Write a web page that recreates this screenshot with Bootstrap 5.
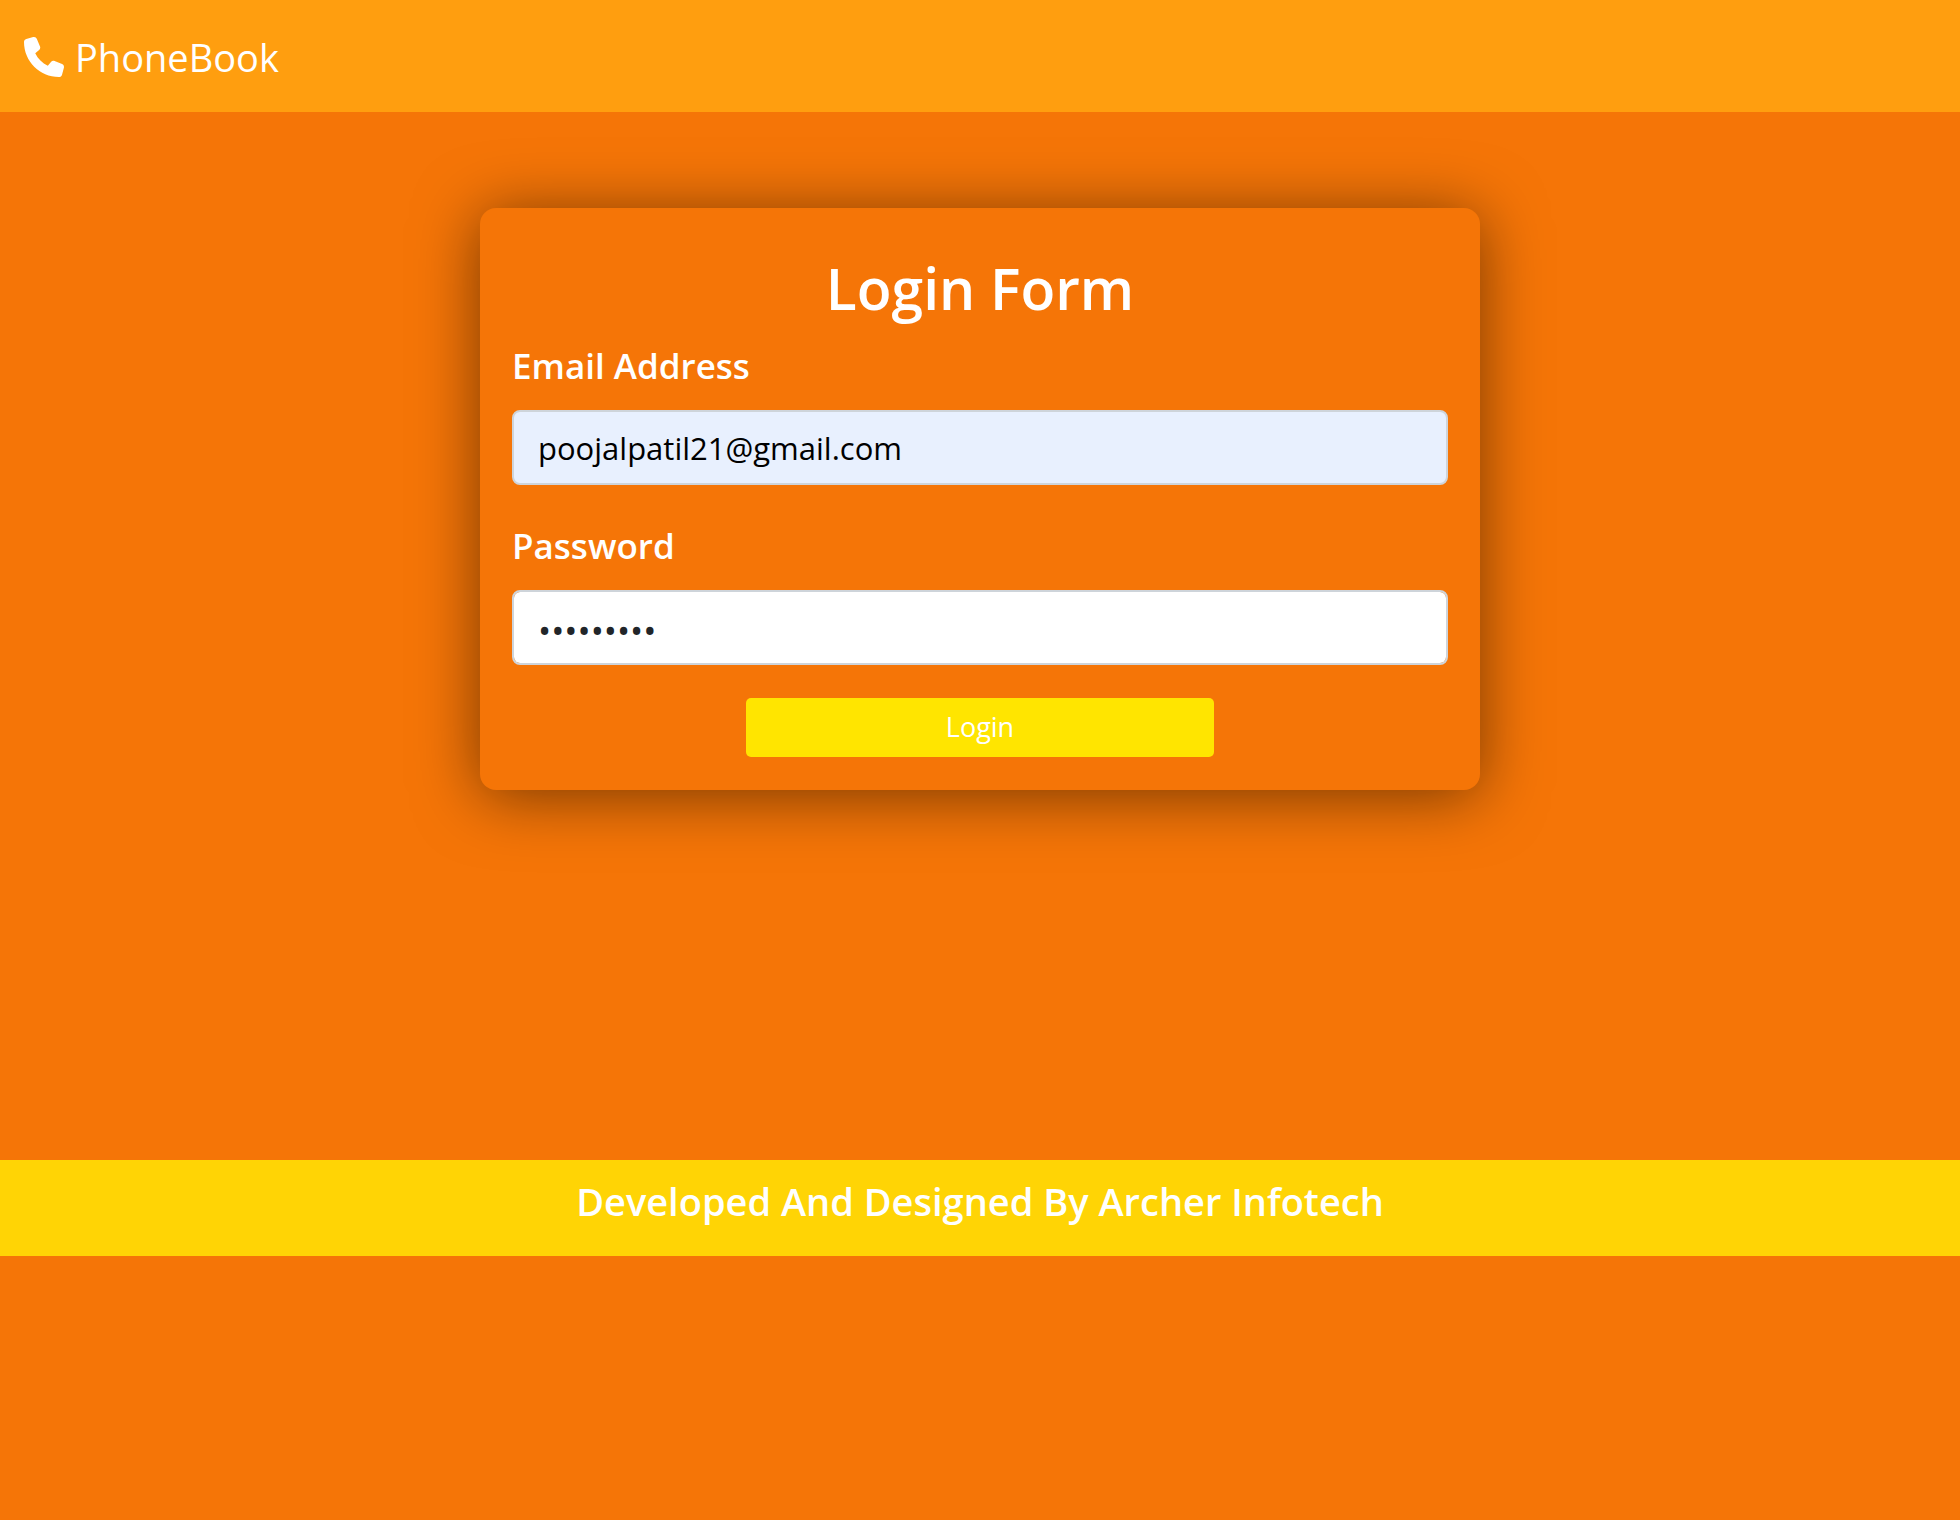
<!DOCTYPE html>
<html lang="en">
<head>
<meta charset="utf-8">
<meta name="viewport" content="width=device-width, initial-scale=1">
<title>PhoneBook</title>
<link href="https://cdn.jsdelivr.net/npm/bootstrap@5.3.0/dist/css/bootstrap.min.css" rel="stylesheet">
<style>
  body { background: #f57507; font-family: "Open Sans", "Noto Sans", sans-serif; }
  .top-nav { background: #ff9e0f; min-height: 112px; padding: 2px 24px 0; }
  .top-nav .navbar-brand { font-size: 38px; line-height: 60px; gap: 11px; }
  .login-card { max-width: 1000px; margin-top: 96px; padding: 46px 32px 33px; border-radius: 16px; background: #f57507; box-shadow: 0 6px 64px rgba(0, 0, 0, .52); }
  .login-card h1 { font-size: 57px; line-height: 68px; font-weight: 600; margin-bottom: 16px; }
  .login-card .form-label { font-size: 35px; line-height: 56px; font-weight: 600; margin-bottom: 16px; }
  .login-card .form-control { height: 75px; padding: 12px 24px; border: 2px solid #ced4da; border-radius: 8px; font-size: 31px; }
  .login-card .filled { background: #e8f0fe; color: #000; }
  .login-card .secret { font-size: 35px; padding: 13px 24px 7px; }
  .login-card .field-group { margin-bottom: 33px; }
  .btn-login { background: #ffe500; border: 0; border-radius: 5px; font-size: 27px; height: 59px; padding: 0; }
  .credit-bar { background: #ffd405; min-height: 96px; margin-top: 370px; padding-top: 15px; }
  .credit-bar h2 { font-size: 38px; line-height: 52px; font-weight: 600; }
</style>
</head>
<body>
<nav class="navbar top-nav">
  <a class="navbar-brand text-white d-flex align-items-center m-0 p-0" href="#">
    <svg width="40" height="40" viewBox="0 0 512 512" fill="currentColor" aria-hidden="true"><path d="M164.900 24.600c-7.700-18.600-28-28.500-47.400-23.200l-88 24C12.100 30.200 0 46 0 64c0 247.400 200.600 448 448 448c18 0 33.800-12.100 38.600-29.500l24-88c5.300-19.400-4.600-39.700-23.200-47.400l-96-40c-16.300-6.800-35.200-2.100-46.300 11.600L304.700 368C234.300 334.700 177.300 277.700 144 207.300L193.300 167c13.700-11.200 18.400-30 11.600-46.300l-40-96z"/></svg>
    <span>PhoneBook</span>
  </a>
</nav>
<main>
  <form class="login-card mx-auto">
    <h1 class="text-center text-white">Login Form</h1>
    <div class="field-group">
      <label class="form-label text-white d-block" for="email">Email Address</label>
      <input class="form-control filled" type="email" id="email" value="poojalpatil21@gmail.com">
    </div>
    <div class="field-group">
      <label class="form-label text-white d-block" for="password">Password</label>
      <input class="form-control secret" type="password" id="password" value="phonebook">
    </div>
    <button class="btn btn-login text-white d-block w-50 mx-auto" type="button">Login</button>
  </form>
</main>
<footer class="credit-bar text-center text-white">
  <h2 class="m-0">Developed And Designed By Archer Infotech</h2>
</footer>
<script src="https://cdn.jsdelivr.net/npm/bootstrap@5.3.0/dist/js/bootstrap.bundle.min.js"></script>
</body>
</html>
